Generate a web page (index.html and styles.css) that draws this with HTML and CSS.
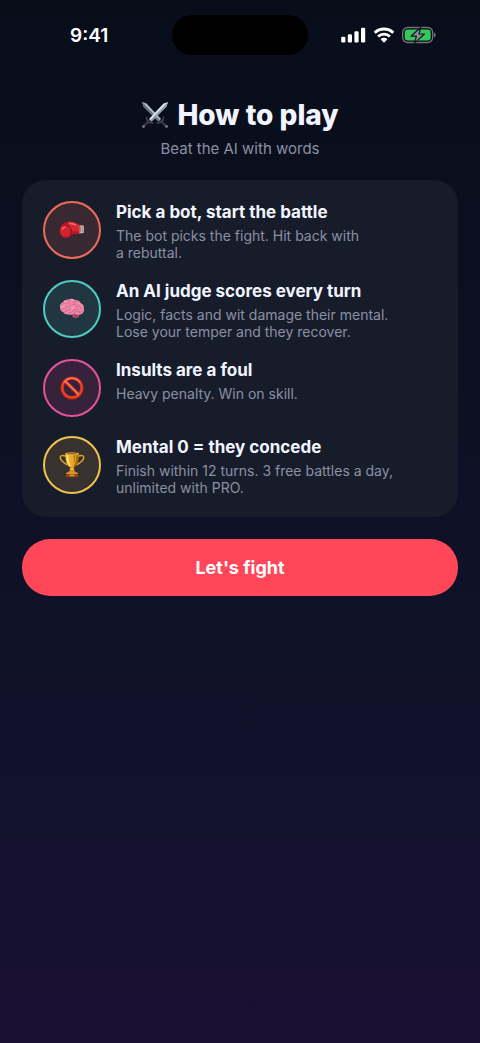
FILE: index.html
```html
<!DOCTYPE html>
<html lang="en">
<head>
  <meta charset="UTF-8">
  <meta name="viewport" content="width=device-width, initial-scale=1">
  <title>How to play</title>
  <link rel="stylesheet" href="styles.css">
</head>
<body>

  <header class="status-bar">
    <span class="time">9:41</span>
    <div class="island"></div>
    <div class="status-icons">
      <svg width="25" height="16" viewBox="0 0 25 16" fill="#fff" aria-hidden="true">
        <rect x="0.2" y="9.7" width="4.2" height="5.8" rx="1.2"/>
        <rect x="6.8" y="7.2" width="4.2" height="8.3" rx="1.2"/>
        <rect x="13.4" y="4.2" width="4.2" height="11.3" rx="1.2"/>
        <rect x="20" y="0.8" width="4.2" height="14.7" rx="1.2"/>
      </svg>
      <svg width="22" height="16" viewBox="0 0 22 16" fill="none" stroke="#fff" stroke-width="2.9" aria-hidden="true">
        <path d="M1.7 5.7a13.4 13.4 0 0 1 18.6 0"/>
        <path d="M5.1 9.5a8.4 8.4 0 0 1 11.8 0"/>
        <path d="M11 15.7l-3.4-3.5a4.8 4.8 0 0 1 6.8 0z" fill="#fff" stroke="none"/>
      </svg>
      <svg width="34" height="18" viewBox="0 0 34 18" aria-hidden="true">
        <rect x="0.7" y="1.5" width="30" height="15" rx="5" fill="none" stroke="#70747d" stroke-width="1.3"/>
        <rect x="2.7" y="3.5" width="26" height="11" rx="3.2" fill="#34c759"/>
        <path d="M32 6.5c2.2.8 2.2 4.2 0 5z" fill="#70747d"/>
        <path d="M18.8 1.2L9 10.2h5.4l-1.9 6.9 9.9-9.1h-5.4z" fill="#8b9097" stroke="#101620" stroke-width="1.2" stroke-linejoin="round"/>
      </svg>
    </div>
  </header>

  <main class="page">
    <h1 class="title">
      <svg width="28" height="28" viewBox="0 0 28 28" aria-hidden="true">
        <path d="M1 1l4.5 1.5L20 18l-2.5 2.5L2.5 5.5z" fill="#aeb9c5"/>
        <path d="M1 1l17.7 18.2-1.2 1.3L2.5 5.5z" fill="#66717e"/>
        <path d="M27 1l-4.5 1.5L8 18l2.5 2.5L25.5 5.5z" fill="#dce4ea"/>
        <path d="M27 1L9.3 19.2l1.2 1.3L25.5 5.5z" fill="#8d98a5"/>
        <path d="M5.5 16.2c0 3.4 2.4 5.6 6.1 5.7M22.5 16.2c0 3.4-2.4 5.6-6.1 5.7" fill="none" stroke="#3f454b" stroke-width="1.6" stroke-linecap="round"/>
        <path d="M8.5 19.5L3 25M19.5 19.5L25 25" stroke="#343b42" stroke-width="2.2"/>
        <circle cx="2.5" cy="25.5" r="1.4" fill="#737980"/>
        <circle cx="25.5" cy="25.5" r="1.4" fill="#737980"/>
      </svg>
      How to play
    </h1>
    <p class="subtitle">Beat the AI with words</p>

    <ul class="card">
      <li class="step">
        <div class="badge badge-orange">
          <svg width="26" height="26" viewBox="0 0 26 26" aria-hidden="true">
            <path d="M19.6 8.2l5 .4c.5 2.4.5 4.9.1 7.3l-5 .5z" fill="#c9bdb9"/>
            <path d="M21.2 9.2c.4 2.1.4 4.1 0 6.2M23.2 9.4c.3 2 .3 3.8 0 5.7" fill="none" stroke="#96535a" stroke-width=".7"/>
            <path d="M.8 14.3C.4 9.3 4.2 5.2 9 4.8c4.5-.5 8.2 1.4 11.4 3v8.9c-2.8.6-5.2.4-8 .9-1 2.3-3.4 3.6-5.9 3.4-3.4-.2-5.5-3-5.7-6.7z" fill="#b91524"/>
            <path d="M8.5 5c4.9-.9 8.7 1.2 11.9 2.9v6.2c-3.2.8-7.3.9-9.4-2.5z" fill="#d42a33"/>
            <ellipse cx="6.6" cy="14.2" rx="5.6" ry="5.8" fill="#d5222f"/>
            <path d="M7.8 8.8c3.8.4 5.6 4.6 4 8.5" fill="none" stroke="#81101f" stroke-width="1"/>
            <path d="M3.3 12.3c.6-1.5 1.7-2.3 3.1-2.3M10.8 6.6c2.2-.2 4 .4 5.8 1.2" fill="none" stroke="#fa7f7d" stroke-width="1.2" stroke-linecap="round"/>
          </svg>
        </div>
        <div class="step-text">
          <h2>Pick a bot, start the battle</h2>
          <p>The bot picks the fight. Hit back with<br>a rebuttal.</p>
        </div>
      </li>
      <li class="step">
        <div class="badge badge-teal">
          <svg width="26" height="26" viewBox="0 0 26 26" aria-hidden="true">
            <path d="M13.5 17.5c2.1.2 3.8-.3 6 .2 1.5 1.5.6 3.5-1.6 4.2-1.6.5-3.3-.3-4.6-1.5z" fill="#b84f70"/>
            <path d="M1 11.5C.5 9 2 6.8 4.4 5.7c1-1.9 3.3-2.5 5.1-2.1 2.2-1.2 4.7-1.1 6.4.4 2.7-.1 4.9 1.1 5.7 3 2.4 1 3.8 3.1 3.2 5.4.9 2.9-.7 5.4-3.7 6-2.1.7-4.4.2-5.8-.9-1.9 1.4-4.8 1.6-6.8.7-2 .2-3.5-.6-4.2-2C2.2 15.5 1 13.7 1 11.5z" fill="#ef87a8"/>
            <path d="M3 9c1.4-2.2 3.4-2.7 5-1.7M7.2 4.7c1.8.2 3 1 3 2.5M11 4.7c2.4-.5 4.4.7 4.6 2.5M16 5.5c2 .3 3.5 1.1 3.8 2.8M2.5 13c2.2.8 3.9-.4 4.3-2.3 2.3.5 4-.2 5.2-1.6M5.5 15.7c1.9-1.5 3.9-.5 5.2-2.7M13.6 8.3c2.3-.6 3.5.6 3.3 2.3M10 16.6c2.8.4 4-1 4.8-3.2 1.6.7 3.2-.1 4-1.4M18.5 9.7c2-.2 3.2 1.1 3.6 2.8M15.4 17c1-2.2 3.3-2.8 5.2-1.4M20.2 16.8c1.6-.3 2.9-1.4 3.1-3" fill="none" stroke="#cb6388" stroke-width=".8" stroke-linecap="round"/>
            <path d="M5.4 6.2c.7-.8 1.6-1.1 2.4-.8M12.3 3.9c1-.1 1.8.2 2.3.8M19 6.7l1.1 1M3 11c.8.6 1.5.4 1.9-.3M13 12c.9.4 1.7.3 2.3-.3" fill="none" stroke="#ffc4d2" stroke-width=".9" stroke-linecap="round"/>
            <path d="M15 19.2c1.5.5 2.8.4 4-.3M15.7 20.6c1 .4 1.9.3 2.8-.1" fill="none" stroke="#7e3150" stroke-width=".6"/>
          </svg>
        </div>
        <div class="step-text">
          <h2>An AI judge scores every turn</h2>
          <p>Logic, facts and wit damage their mental.<br>Lose your temper and they recover.</p>
        </div>
      </li>
      <li class="step">
        <div class="badge badge-pink">
          <svg width="26" height="26" viewBox="0 0 26 26" fill="none" aria-hidden="true">
            <circle cx="13" cy="13" r="9.8" stroke="#b32213" stroke-width="3.4"/>
            <path d="M6.2 6.2l13.6 13.6" stroke="#c93520" stroke-width="3.4"/>
            <circle cx="13" cy="12.7" r="9.8" stroke="#e84126" stroke-width="2.3"/>
            <path d="M6.3 6.1l13.5 13.5" stroke="#fa7357" stroke-width="1.8"/>
            <path d="M5.2 7.1a10 10 0 0 1 15.6 0" stroke="#ff806a" stroke-width="1.1" stroke-linecap="round"/>
          </svg>
        </div>
        <div class="step-text">
          <h2>Insults are a foul</h2>
          <p>Heavy penalty. Win on skill.</p>
        </div>
      </li>
      <li class="step">
        <div class="badge badge-gold">
          <svg width="26" height="26" viewBox="0 0 26 26" aria-hidden="true">
            <path d="M7 4.4C3.4 2.6.8 3.5 1.3 6.2c.5 3 3.6 4.2 6.8 6.7M19 4.4c3.6-1.8 6.2-.9 5.7 1.8-.5 3-3.6 4.2-6.8 6.7" fill="none" stroke="#dda028" stroke-width="1.5"/>
            <path d="M11.7 14h2.6c0 3.2.9 5.1 3.3 7H8.4c2.4-1.9 3.3-3.8 3.3-7z" fill="#d18a16"/>
            <path d="M6.3 1.5h13.4c.2 6.7-1.5 12.5-5 14.1h-3.4c-3.5-1.6-5.2-7.4-5-14.1z" fill="#e9aa24"/>
            <path d="M14.8 2.5h4.8c0 6.2-1.6 11.3-4.8 13.1z" fill="#a96808"/>
            <path d="M8.4 3c.1 5 .9 8.5 2.5 10.8" fill="none" stroke="#ffe584" stroke-width="1.9"/>
            <path d="M16.8 3c-.1 4.3-.7 7.3-1.8 9.6" fill="none" stroke="#f4bd37" stroke-width=".9"/>
            <ellipse cx="13" cy="1.8" rx="6.7" ry="1" fill="#8f5407" stroke="#ffd764" stroke-width=".6"/>
            <path d="M10.8 17h4.4" stroke="#ffe080" stroke-width="1"/>
            <path d="M7.2 21h11.6l.7 4.3h-13z" fill="#8b3c19"/>
            <path d="M7.2 20.6h11.6v1.2H7.2z" fill="#eaa92d"/>
            <path d="M10.5 22.6h5v1.6h-5z" fill="#e4a13c"/>
          </svg>
        </div>
        <div class="step-text">
          <h2>Mental 0 = they concede</h2>
          <p>Finish within 12 turns. 3 free battles a day,<br>unlimited with PRO.</p>
        </div>
      </li>
    </ul>

    <button type="button" class="fight-btn">Let's fight</button>
  </main>

</body>
</html>
```

FILE: styles.css
```css
* {
  box-sizing: border-box;
}

body {
  font-family: Inter, "Liberation Sans", sans-serif;
  background: linear-gradient(#080d1a 0%, #0f1228 60%, #191033 100%);
  color: #f2f5ff;
  margin: 0;
  min-height: 100vh;
}

h1,
h2,
p,
ul {
  margin: 0;
  padding: 0;
}

.status-bar {
  display: grid;
  grid-template-columns: 1fr 136px 1fr;
  align-items: center;
  padding: 15px 44px 0;
}

.time {
  padding-left: 26px;
  font-size: 19px;
  font-weight: 600;
  color: #fff;
}

.island {
  height: 40px;
  border-radius: 20px;
  background-color: #000;
}

.status-icons {
  display: flex;
  justify-content: flex-end;
  align-items: center;
  gap: 7px;
}

.page {
  padding: 42px 22px;
}

.title {
  display: flex;
  justify-content: center;
  align-items: center;
  gap: 8px;
  font-size: 28px;
  line-height: 36px;
  font-weight: 800;
}

.subtitle {
  margin-top: 6px;
  font-size: 15px;
  line-height: 20px;
  text-align: center;
  color: #8b90a3;
}

.card {
  display: flex;
  flex-direction: column;
  gap: 19px;
  margin-top: 21px;
  padding: 21px;
  border-radius: 24px;
  background-color: #171c2b;
  list-style: none;
}

.step {
  display: flex;
  align-items: flex-start;
  gap: 15px;
}

.badge {
  display: flex;
  flex-shrink: 0;
  justify-content: center;
  align-items: center;
  width: 58px;
  height: 58px;
  border: 2px solid;
  border-radius: 50%;
}

.badge-orange {
  border-color: #ee6c55;
  background-color: #382831;
}

.badge-teal {
  border-color: #50cbbf;
  background-color: #203640;
}

.badge-pink {
  border-color: #e6529a;
  background-color: #36233b;
}

.badge-gold {
  border-color: #f1c04d;
  background-color: #37322f;
}

.step-text h2 {
  font-size: 17px;
  line-height: 23px;
  font-weight: 700;
}

.step-text p {
  margin-top: 3px;
  font-size: 14px;
  line-height: 17px;
  color: #8b90a3;
}

.fight-btn {
  display: block;
  width: 100%;
  height: 57px;
  margin-top: 22px;
  border: none;
  border-radius: 28px;
  background-color: #ff4759;
  color: #fff;
  font-family: inherit;
  font-size: 18px;
  font-weight: 700;
  cursor: pointer;
}
```
